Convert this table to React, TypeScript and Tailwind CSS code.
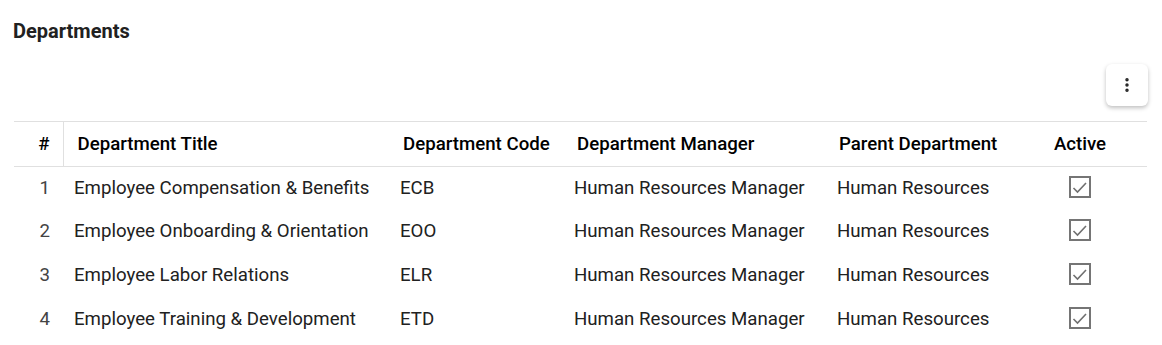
import { EllipsisVertical } from 'lucide-react';

type Dept = { id: number; title: string; code: string; manager: string; parent: string; active: boolean };

const rows: Dept[] = [
  { id: 1, title: 'Employee Compensation & Benefits', code: 'ECB', manager: 'Human Resources Manager', parent: 'Human Resources', active: true },
  { id: 2, title: 'Employee Onboarding & Orientation', code: 'EOO', manager: 'Human Resources Manager', parent: 'Human Resources', active: true },
  { id: 3, title: 'Employee Labor Relations', code: 'ELR', manager: 'Human Resources Manager', parent: 'Human Resources', active: true },
  { id: 4, title: 'Employee Training & Development', code: 'ETD', manager: 'Human Resources Manager', parent: 'Human Resources', active: true },
];

function CheckBox() {
  return (
    <span className="inline-flex h-[22px] w-[22px] items-center justify-center border-2 border-[#757575] bg-white">
      <svg width="18" height="18" viewBox="0 0 18 18" fill="none">
        <path d="M2.5 10 L6.5 14 L15 5" stroke="#707070" strokeWidth="1.6" />
      </svg>
    </span>
  );
}

export default function App() {
  return (
    <div className="w-[1162px] h-[345px] bg-white text-[#212121] font-['Roboto',sans-serif]">
      <h1 className="pl-[13px] pt-[19px] text-[20px] font-bold leading-6 text-[#212121]">Departments</h1>

      <div className="flex justify-end pr-[14px] pt-[21px]">
        <button className="flex h-[42px] w-[42px] items-center justify-center rounded-md bg-white shadow-[0_2px_4px_rgba(0,0,0,0.25)]">
          <EllipsisVertical size={18} strokeWidth={2.6} color="#212121" />
        </button>
      </div>

      <table className="ml-[14px] mt-[15px] w-[1133px] table-fixed border-collapse text-[18.67px]">
        <colgroup>
          <col className="w-[49px]" />
          <col className="w-[326px]" />
          <col className="w-[174px]" />
          <col className="w-[263px]" />
          <col className="w-[187px]" />
          <col className="w-[134px]" />
        </colgroup>
        <thead>
          <tr className="h-[45px] border-t border-b border-[#e0e0e0] text-black">
            <th className="border-r border-[#e0e0e0] pr-[13px] text-right font-medium">#</th>
            <th className="pl-[14px] text-left font-medium">Department Title</th>
            <th className="pl-[14px] text-left font-medium">Department Code</th>
            <th className="pl-[14px] text-left font-medium">Department Manager</th>
            <th className="pl-[13px] text-left font-medium">Parent Department</th>
            <th className="text-center font-medium">Active</th>
          </tr>
        </thead>
        <tbody>
          {rows.map((r) => (
            <tr key={r.id} className="h-[43.6px]">
              <td className="pr-[13px] pb-[1px] text-right text-[#444]">{r.id}</td>
              <td className="pl-[11px] pb-[1px]">{r.title}</td>
              <td className="pl-[11px] pb-[1px]">{r.code}</td>
              <td className="pl-[11px] pb-[1px]">{r.manager}</td>
              <td className="pl-[11px] pb-[1px]">{r.parent}</td>
              <td className="text-center align-middle">
                <span className="inline-flex pt-[3px]">{r.active && <CheckBox />}</span>
              </td>
            </tr>
          ))}
        </tbody>
      </table>
    </div>
  );
}
